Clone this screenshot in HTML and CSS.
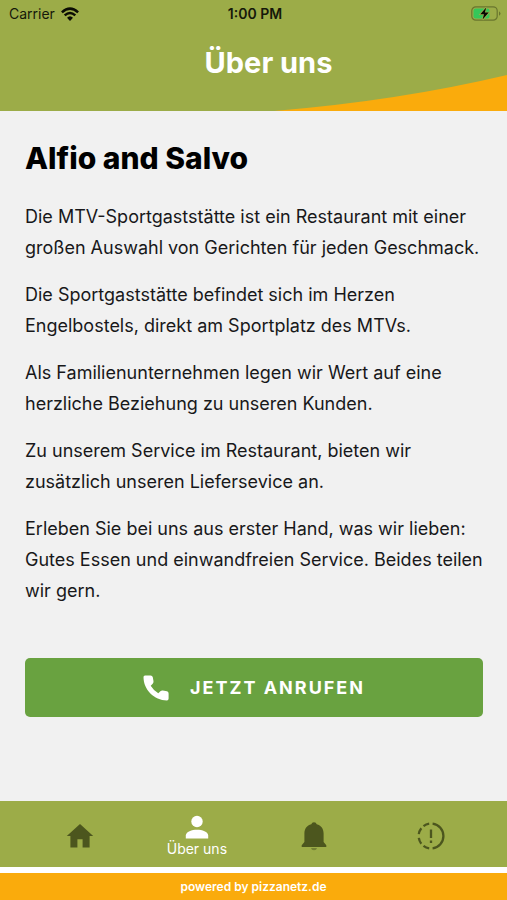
FILE: index.html
```html
<!DOCTYPE html>
<html lang="de">
<head>
<meta charset="utf-8">
<meta name="viewport" content="width=device-width, initial-scale=1">
<title>Über uns</title>
<link rel="stylesheet" href="styles.css">
</head>
<body>
<div class="app">
  <header class="header">
    <svg class="header-wave" viewBox="0 0 236 36" preserveAspectRatio="none" aria-hidden="true"><path d="M0 36Q125 26 236 0V36Z" fill="#faab0c"/></svg>
    <div class="status">
      <div class="carrier">
        <span>Carrier</span>
        <svg width="18" height="14" viewBox="0 0 18 14" fill="none" stroke="#0b0d04" stroke-width="2.5" aria-hidden="true"><path d="M.9 5.3Q9-2.1 17.100 5.300"/><path d="M3.700 8.400Q9 3.600 14.300 8.400"/><path d="M6 10.800Q9 7.700 12 10.800L9 13.900Z" fill="#0b0d04" stroke="none"/></svg>
      </div>
      <time class="clock">1:00 PM</time>
      <svg class="battery" width="30" height="15" viewBox="0 0 30 15" aria-hidden="true"><rect x=".8" y=".8" width="25.400" height="13.400" rx="4" fill="none" stroke="#69752e" stroke-width="1.200"/><rect x="2.500" y="2.500" width="16" height="10" rx="2.300" fill="#35c759"/><path d="M28 5.200Q31 7.500 28 9.800Z" fill="#69752e"/><path d="M15.200 1.400L9.300 8.300H13L11.600 13.600L17.700 6.600H13.900Z" fill="#050803" stroke="#9cac48" stroke-width="1.600" paint-order="stroke"/></svg>
    </div>
    <h1 class="title">Über uns</h1>
  </header>
  <main class="content">
    <h2 class="name">Alfio and Salvo</h2>
    <div class="story">
      <p>Die MTV-Sportgaststätte ist ein Restaurant mit einer großen Auswahl von Gerichten für jeden Geschmack.</p>
      <p>Die Sportgaststätte befindet sich im Herzen Engelbostels, direkt am Sportplatz des MTVs.</p>
      <p>Als Familienunternehmen legen wir Wert auf eine herzliche Beziehung zu unseren Kunden.</p>
      <p>Zu unserem Service im Restaurant, bieten wir zusätzlich unseren Liefersevice an.</p>
      <p>Erleben Sie bei uns aus erster Hand, was wir lieben: Gutes Essen und einwandfreien Service. Beides teilen wir gern.</p>
    </div>
    <button class="call" type="button">
      <svg width="26" height="26" viewBox="0 0 26 26" fill="#fff" aria-hidden="true"><path d="M2 .5H7.600Q9.400 .5 9.800 2.200L10.500 6.300Q10.700 7.700 9.700 8.700L7.700 10.800Q10.600 15.600 15.300 18.300L17.400 16.300Q18.400 15.300 19.800 15.500L24 16.300Q25.600 16.700 25.600 18.400V23.600Q25.600 25.500 23.900 25.500C11.200 25.500 .5 14.800 .5 2.100Q.5 .5 2 .5Z"/></svg>
      <span>JETZT ANRUFEN</span>
    </button>
  </main>
  <nav class="tabs">
    <a class="tab" href="#home" aria-label="Start">
      <svg width="28" height="28" viewBox="0 0 28 28" fill="#4c561e" aria-hidden="true"><path d="M14 2L27.200 14H23.600V25.400H16.600V17.200H11.400V25.400H4.400V14H.8Z"/></svg>
    </a>
    <a class="tab active" href="#about" aria-current="page">
      <svg width="24" height="24" viewBox="0 0 24 24" fill="#fff" aria-hidden="true"><circle cx="12" cy="6.500" r="5.700"/><path d="M.8 23.500V20.500C.8 16.800 7 14.800 12 14.800S23.200 16.800 23.200 20.500V23.500Z"/></svg>
      <span>Über uns</span>
    </a>
    <a class="tab" href="#news" aria-label="Neuigkeiten">
      <svg width="28" height="30" viewBox="0 0 28 30" fill="#4c561e" aria-hidden="true"><path d="M14 1.200Q16.200 1.200 16.700 3.300C21.200 4.300 23.600 8 23.600 12.600V21L26.300 24.200V26H1.700V24.200L4.400 21V12.600C4.400 8 6.800 4.300 11.300 3.300Q11.800 1.200 14 1.200Z"/><path d="M11 27H17Q16.500 29.200 14 29.200T11 27Z" opacity=".5"/></svg>
    </a>
    <a class="tab" href="#info" aria-label="Hinweise">
      <svg width="28" height="28" viewBox="0 0 28 28" fill="none" stroke="#4c561e" stroke-width="2.300" aria-hidden="true"><path d="M15.600 1.700A12.400 12.400 0 0 1 15.600 26.300"/><path d="M12.200 1.700A12.400 12.400 0 0 0 6.500 4.100M4.300 6.300A12.400 12.400 0 0 0 1.800 12.200M1.800 15.800A12.400 12.400 0 0 0 4.300 21.700M6.500 23.900A12.400 12.400 0 0 0 12.200 26.300"/><path d="M14 7.400V15.900M14 18.500V21.100"/></svg>
    </a>
  </nav>
  <footer class="footer">powered by pizzanetz.de</footer>
</div>
</body>
</html>
```
FILE: styles.css
```css
* {
  box-sizing: border-box;
}

body {
  margin: 0;
  background: #f1f1f1;
  color: #18181a;
  font-family: Inter, "Liberation Sans", sans-serif;
}

h1,
h2,
p {
  margin: 0;
}

svg {
  display: block;
  flex: none;
}

.app {
  display: flex;
  flex-direction: column;
  min-height: 100vh;
}

.header {
  position: relative;
  padding-bottom: 30px;
  background: #9cac48;
}

.header-wave {
  position: absolute;
  right: 0;
  bottom: 0;
  width: 46%;
  height: 36px;
}

.status {
  position: relative;
  display: grid;
  grid-template-columns: 1fr auto 1fr;
  align-items: center;
  height: 27px;
  padding: 0 6px 0 9px;
  color: #15180a;
  font-size: 14px;
}

.carrier {
  display: flex;
  align-items: center;
  gap: 6px;
}

.clock {
  font-weight: 600;
}

.battery {
  justify-self: end;
}

.title {
  position: relative;
  padding: 18px 0 0 30px;
  color: #fff;
  font-size: 29px;
  font-weight: 700;
  line-height: 36px;
  text-align: center;
}

.content {
  flex: 1;
  padding: 29px 24px 80px 25px;
}

.name {
  color: #000;
  font-size: 30px;
  font-weight: 800;
  line-height: 36px;
}

.story {
  display: grid;
  gap: 16px;
  margin-top: 25px;
  font-size: 18px;
  line-height: 31px;
}

.call {
  display: flex;
  align-items: center;
  justify-content: center;
  gap: 21px;
  width: 100%;
  height: 59px;
  margin-top: 52px;
  padding: 0;
  border: 0;
  border-radius: 5px;
  background: #69a240;
  color: #fff;
  font-family: inherit;
  font-size: 18px;
  font-weight: 700;
  letter-spacing: 2px;
}

.tabs {
  display: grid;
  grid-template-columns: repeat(4, 1fr);
  height: 66px;
  padding: 0 17px 0 21px;
  background: #9cac48;
}

.tab {
  display: flex;
  flex-direction: column;
  align-items: center;
  justify-content: center;
  padding-top: 4px;
  color: #fff;
  font-size: 14px;
  line-height: 20px;
  text-decoration: none;
}

.active {
  padding-top: 6px;
}

.footer {
  padding: 4px 0;
  border-top: 6px solid #fff;
  background: #faab0c;
  color: #fff;
  font-size: 12px;
  font-weight: 600;
  line-height: 19px;
  text-align: center;
}
```
